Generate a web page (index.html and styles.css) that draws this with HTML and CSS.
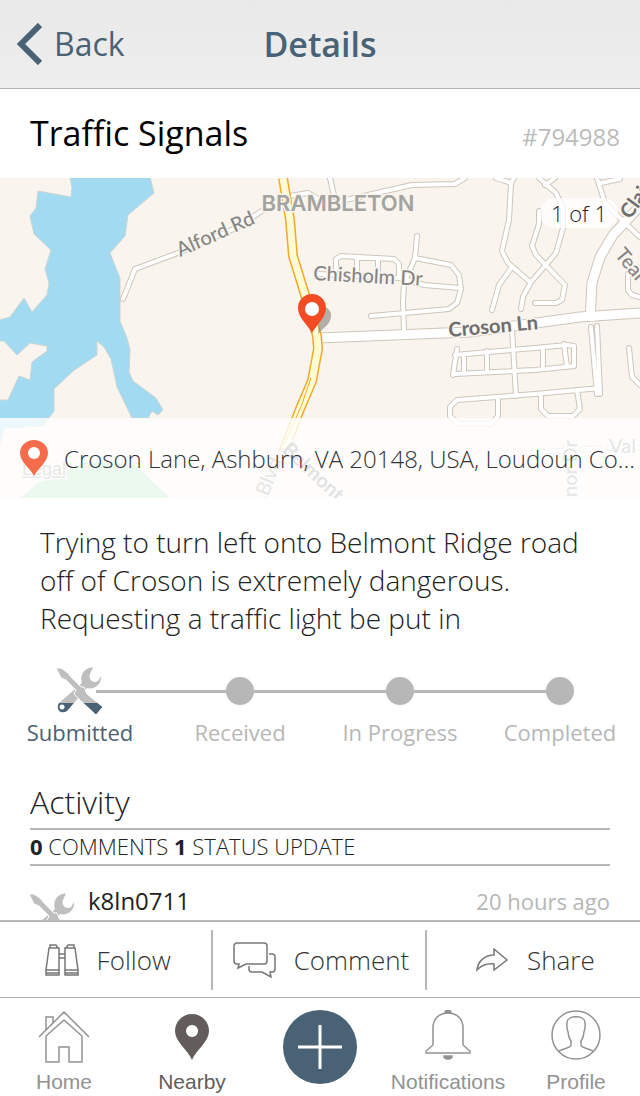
FILE: index.html
```
<!DOCTYPE html>
<html lang="en">
<head>
    <meta charset="UTF-8">
    <meta name="viewport" content="width=device-width, initial-scale=1.0">
    <title>Details</title>
    <link rel="stylesheet" href="styles.css">
</head>
<body>
    <header class="top-bar">
        <a class="back" href="#">
            <svg width="26" height="42" viewBox="0 0 26 42"><path d="M24 2 5 21l19 19" fill="none" stroke="currentColor" stroke-width="6"/></svg>
            <span>Back</span>
        </a>
        <h1>Details</h1>
    </header>

    <main class="content">
        <div class="issue-title">
            <h2>Traffic Signals</h2>
            <span class="issue-id">#794988</span>
        </div>

        <div class="map">
            <svg class="map-canvas" viewBox="0 0 640 320" preserveAspectRatio="xMidYMid slice">
                <defs>
                    <g id="roads" fill="none" stroke-linecap="round" stroke-linejoin="round">
                        <path d="M123 121 135 91 178 75 236 50 274 25 290 18 308 15 318 21 M330 0 334 17 M322 26 350 21 412 7 455 6 465 0"/>
                        <path d="M336 92V81L341 78 394 81 399 86V98 M357 79V96 M378 80V96"/>
                        <path d="M417 58 415 80 404 105 403 125 404 152 M415 80 451 87 459 97 461 111 457 125 449 131 371 138 M318 96 400 100 424 107 460 110"/>
                        <path d="M496 0 511 5 514 0 M511 5 509 42 502 73 508 85 530 104 M512 89 499 107 492 132"/>
                        <path d="M539 33V46L532 68 536 77 565 107 562 122 556 125H535"/>
                        <path d="M539 0 556 15 563 31 563 50 556 75 531 104 523 119 521 131 M545 7 555 0"/>
                        <path d="M597 0 605 25 626 46 640 59 M601 5 620 1"/>
                        <path d="M628 96V112L632 117 640 119"/>
                        <path d="M457 171 453 197 M455 177 500 173 535 170 567 167 574 168V188L535 192 455 196 M464 176V195 M487 173V193 M543 169V188 M564 166 567 189 M512 151 516 218"/>
                        <path d="M591 149 597 216 M597 148 600 216 M600 210 535 216 457 222 450 229V238L458 246H491L498 238V220 M541 216V231L548 238H573L580 231 577 212"/>
                        <path d="M629 170 632 199 640 207 M528 275 600 270 M609 270H640"/>
                    </g>
                    <g id="main-roads" fill="none" stroke-linejoin="round">
                        <path d="M318 160 470 154 580 139 640 135"/>
                        <path d="M590 143 592 105 600 79 613 57 640 28"/>
                    </g>
                    <path id="parkway" fill="none" stroke-linejoin="round" d="M283 0 290 42 293 78 306 120 317 158 318 171 312 203 300 231 283 275"/>
                </defs>
                <rect width="640" height="320" fill="#f9f5ee"/>
                <path fill="#a2daf1" stroke="#cbd5d2" d="M70-1 72 10 71 19 38 13 36 30 30 38 34 56 51 72 45 91 49 105 47 117 32 134 24 120 10 139-1 142V163H4L17 177 30 165 47 168V173L32 184 30 202 19 198 8 222H-1V270L4 250 43 248 54 233V211L73 193 97 177V163L104 169 111 181 117 209 132 240H148L152 233 158 237 163 232 156 220 133 203 129 194 130 172 127 160 120 143V100L110 75 125 58 128 37 154 15 150-1Z"/>
                <path fill="#a0dfb0" d="M20 320 38 305 85 284 135 287 170 320Z"/>
                <use href="#roads" stroke="#cfc5bb" stroke-width="6"/>
                <use href="#main-roads" stroke="#cfc5bb" stroke-width="11"/>
                <use href="#roads" stroke="#fff" stroke-width="4"/>
                <use href="#main-roads" stroke="#fff" stroke-width="9"/>
                <use href="#parkway" stroke="#f4a828" stroke-width="10"/>
                <use href="#parkway" stroke="#fffbd5" stroke-width="7"/>
                <path d="M311 200 302 226 284 267" fill="none" stroke="#f4a828"/>
                <path d="M283 275 265 320" fill="none" stroke="#ddd9d5" stroke-width="6"/>

                <g class="map-labels">
                    <text class="town" x="338" y="33" text-anchor="middle">BRAMBLETON</text>
                    <text transform="translate(180 79) rotate(-24)">Alford Rd</text>
                    <text transform="translate(313 102) rotate(3)">Chisholm Dr</text>
                    <text class="strong" transform="translate(449 159) rotate(-5)">Croson Ln</text>
                    <text class="strong" transform="translate(630 42) rotate(-54)">Clai</text>
                    <text transform="translate(614 77) rotate(50)">Teal</text>
                    <text transform="translate(609 275)">Val</text>
                    <text transform="translate(577 319) rotate(-90)">nor Dr</text>
                    <text transform="translate(268 319) rotate(-68)">Blvd</text>
                    <text class="strong" transform="translate(281 273) rotate(43)">Belmont</text>
                    <text class="legal" x="22" y="297">Legal</text>
                </g>

                <path d="M325 129c7 3 8 10 3 17l-10 10 2-24z" fill="#8d8a85" opacity=".65"/>
                <path d="M312 155c-4-8-14-15-14-25a14 14 0 0 1 28 0c0 10-10 17-14 25z" fill="#f34b23"/>
                <circle cx="312" cy="131" r="7" fill="#fff"/>
            </svg>
            <span class="photo-count">1 of 1</span>
            <div class="address">
                <svg width="28" height="36" viewBox="0 0 28 36"><path d="M14 36C10 28 0 22 0 13a14 13 0 0 1 28 0c0 9-10 15-14 23z" fill="#f66b4a"/><circle cx="14" cy="13" r="6" fill="#fff"/></svg>
                <span>Croson Lane, Ashburn, VA 20148, USA, Loudoun County</span>
            </div>
        </div>

        <p class="description">Trying to turn left onto Belmont Ridge road off of Croson is extremely dangerous. Requesting a traffic light be put in</p>

        <ol class="steps">
            <li class="current">
                <span class="marker">
                    <svg width="46" height="48" viewBox="0 0 46 48">
                        <defs>
                            <linearGradient id="progress" gradientUnits="userSpaceOnUse" x1="0" y1="0" x2="0" y2="48">
                                <stop offset=".74" stop-color="#bfbfbf"/>
                                <stop offset=".74" stop-color="#4a6275"/>
                            </linearGradient>
                            <g id="tools">
                                <path fill-rule="evenodd" d="M36 .5C28 0 22 8 25 16L2 36C-2 42 4 48 10 44L30 21C38 23 45 17 44 9L41 14C36 17 31 12 33 7ZM5 37.500a2.500 2.500 0 1 0 .1 0Z"/>
                                <path stroke="#fff" d="M-1 1 4 1 11 6 14 10 24 20 27 20 30 27 46 40 39 48 25 35 17 27 19 23 9 13 4 11Z"/>
                            </g>
                        </defs>
                        <use href="#tools" fill="url(#progress)"/>
                    </svg>
                </span>
                Submitted
            </li>
            <li><span class="marker"><i class="dot"></i></span>Received</li>
            <li><span class="marker"><i class="dot"></i></span>In Progress</li>
            <li><span class="marker"><i class="dot"></i></span>Completed</li>
        </ol>

        <section class="activity">
            <h3>Activity</h3>
            <p class="counts"><b>0</b> COMMENTS <b>1</b> STATUS UPDATE</p>
            <article class="entry">
                <svg width="46" height="48" viewBox="0 0 46 48"><use href="#tools" fill="#bfbfbf"/></svg>
                <span class="user">k8ln0711</span>
                <time>20 hours ago</time>
            </article>
        </section>
    </main>

    <div class="actions">
        <button type="button">
            <svg width="34" height="32" viewBox="0 0 34 32" fill="none" stroke="currentColor" stroke-width="1.500">
                <path d="M4 4 1 26V31H14V4ZM20 4V31H33V26L30 4ZM5 4V1H11L13 4M21 4 23 1H29V4M1 26H14M20 26H33M1 29H14M20 29H33M14 10H20M14 14H20"/>
            </svg>
            Follow
        </button>
        <button type="button">
            <svg width="43" height="36" viewBox="0 0 43 36" fill="none" stroke="currentColor" stroke-width="1.500">
                <path d="M4 1H31a3 3 0 0 1 3 3V19a3 3 0 0 1-3 3H13L5 26 6 22H4a3 3 0 0 1-3-3V4a3 3 0 0 1 3-3ZM36 12H39a3 3 0 0 1 3 3V27a3 3 0 0 1-3 3H37L38 35 29 30H19a3 3 0 0 1-3-3V24"/>
            </svg>
            Comment
        </button>
        <button type="button">
            <svg width="33" height="24" viewBox="0 0 33 24" fill="none" stroke="currentColor" stroke-width="1.500">
                <path d="M18 1 31 12 18 22V16C10 15 5 18 1 22 2 13 9 7 18 7Z"/>
            </svg>
            Share
        </button>
    </div>

    <nav class="tabs">
        <a href="#">
            <svg width="52" height="53" viewBox="0 0 52 53" fill="none" stroke="currentColor" stroke-width="1.500">
                <path d="M1 27 26 2 51 27M8 20V7H15V13M8 26V52H21V37H31V52H44V26L26 10Z"/>
            </svg>
            Home
        </a>
        <a class="active" href="#">
            <svg width="34" height="46" viewBox="0 0 34 46" fill="currentColor">
                <path fill-rule="evenodd" d="M17 46C13 36 0 28 0 17a17 17 0 0 1 34 0c0 11-13 19-17 29zM17 11a6 6 0 1 0 .1 0Z"/>
            </svg>
            Nearby
        </a>
        <a class="add" href="#" aria-label="Add">
            <svg width="74" height="74" viewBox="0 0 74 74"><circle cx="37" cy="37" r="37" fill="#4a6275"/><path d="M15 37H59M37 15V59" stroke="#fff" stroke-width="3"/></svg>
        </a>
        <a href="#">
            <svg width="46" height="50" viewBox="0 0 46 50" fill="none" stroke="currentColor" stroke-width="1.500">
                <path d="M1 43H45V41L38 35V18C38 8 31 3 23 3S8 8 8 18V35L1 41Z"/>
                <path d="M20 3a3 3 0 0 1 6 0ZM19 46H27C27 50 19 50 19 46Z" fill="currentColor"/>
            </svg>
            Notifications
        </a>
        <a href="#">
            <svg width="50" height="50" viewBox="0 0 50 50" fill="none" stroke="currentColor" stroke-width="1.500">
                <circle cx="25" cy="25" r="24"/>
                <path d="M8 41C14 38 20 38 20 35V31C18 28 17 25 17 22 15 17 16 15 16 12 17 5 33 5 34 12 34 15 35 17 33 22 33 25 32 28 30 31V35C30 38 36 38 42 41"/>
            </svg>
            Profile
        </a>
    </nav>
</body>
</html>
```
FILE: styles.css
```
* {
    box-sizing: border-box;
}
body {
    display: flex;
    flex-direction: column;
    height: 100vh;
    margin: 0;
    background: #fff;
    color: #222;
    font-family: "Open Sans", sans-serif;
}
h1, h2, h3, p, ol {
    margin: 0;
    padding: 0;
}
svg {
    display: block;
    flex-shrink: 0;
}
.top-bar {
    display: grid;
    grid-template-columns: 1fr auto 1fr;
    align-items: center;
    padding: 20px 16px;
    border-bottom: 1px solid #b2b2b2;
    background: linear-gradient(#e9e9e9, #eee);
    color: #4a6275;
    line-height: 48px;
}
.top-bar h1 {
    font-size: 34px;
    font-weight: 600;
}
.back {
    display: flex;
    align-items: center;
    gap: 12px;
    color: inherit;
    font-size: 32px;
    text-decoration: none;
}
.content {
    flex: 1;
    min-height: 0;
    overflow-y: auto;
    scrollbar-width: none;
}
.issue-title {
    display: flex;
    justify-content: space-between;
    align-items: baseline;
    padding: 20px 20px 17px 30px;
    line-height: 48px;
}
.issue-title h2 {
    color: #000;
    font-size: 34px;
    font-weight: 400;
}
.issue-id {
    color: #bbb;
    font-size: 24px;
}

/* Map */
.map {
    position: relative;
    height: 320px;
    overflow: hidden;
}
.map-canvas {
    width: 100%;
    height: 100%;
}
.map-labels text {
    fill: #858585;
    stroke: #f9f5ee;
    stroke-width: 3px;
    paint-order: stroke;
    font-family: Lato, sans-serif;
    font-size: 20px;
    font-weight: 500;
}
.map-labels .strong {
    fill: #6e6e6e;
    font-weight: 700;
}
.map-labels .town {
    fill: #a3a3a0;
    font-family: Inter, sans-serif;
    font-size: 22px;
    font-weight: 600;
}
.map-labels .legal {
    font-family: "Liberation Sans", sans-serif;
    font-size: 18px;
    text-decoration: underline;
}
.photo-count {
    position: absolute;
    top: 20px;
    right: 22px;
    padding: 0 11px;
    border-radius: 15px;
    background: rgba(255, 255, 255, 0.75);
    font-size: 22px;
    font-weight: 300;
    line-height: 30px;
}
.address {
    position: absolute;
    right: 0;
    bottom: 0;
    left: 0;
    display: flex;
    align-items: center;
    gap: 16px;
    height: 80px;
    padding: 0 2px 0 20px;
    background: rgba(255, 255, 255, 0.8);
    color: #333;
    font-size: 24px;
    font-weight: 300;
}
.address span {
    overflow: hidden;
    text-overflow: ellipsis;
    white-space: nowrap;
}

.description {
    padding: 25px 40px 28px;
    font-size: 28px;
    font-weight: 300;
    line-height: 38px;
}

/* Progress steps */
.steps {
    display: grid;
    grid-template-columns: repeat(4, 1fr);
    list-style: none;
    color: #b7b7b7;
    font-size: 22px;
    line-height: 30px;
    text-align: center;
}
.steps li {
    position: relative;
}
.steps .current {
    color: #4a6275;
}
.steps li + li::before {
    content: "";
    position: absolute;
    top: 25px;
    right: 50%;
    width: 100%;
    height: 3px;
    background: #b7b7b7;
}
.steps .current + li::before {
    width: 90%;
}
.marker {
    display: flex;
    justify-content: center;
    align-items: center;
    height: 52px;
}
.dot {
    z-index: 1;
    width: 28px;
    height: 28px;
    border-radius: 50%;
    background: #b7b7b7;
}

.activity {
    padding: 31px 30px 0;
}
.activity h3 {
    padding-bottom: 2px;
    font-size: 32px;
    font-weight: 300;
    line-height: 48px;
}
.counts {
    padding-bottom: 2px;
    border-top: 2px solid #b7b7b7;
    border-bottom: 2px solid #b7b7b7;
    font-size: 22px;
    font-weight: 300;
    line-height: 32px;
}
.counts b {
    font-weight: 700;
}
.entry {
    display: flex;
    align-items: flex-start;
    gap: 12px;
    padding-top: 19px;
    line-height: 32px;
}
.entry svg {
    margin-top: 8px;
}
.user {
    flex: 1;
    font-size: 24px;
}
.entry time {
    color: #b7b7b7;
    font-size: 22px;
}

/* Follow / comment / share */
.actions {
    display: grid;
    grid-template-columns: repeat(3, 1fr);
    padding: 8px 0 7px;
    border-top: 2px solid #b7b7b7;
}
.actions button {
    display: flex;
    justify-content: center;
    align-items: center;
    gap: 18px;
    height: 60px;
    padding: 0 0 0 4px;
    border: none;
    background: none;
    color: #333;
    font-family: inherit;
    font-size: 26px;
    font-weight: 300;
    cursor: pointer;
}
.actions svg {
    color: #777;
}
.actions button:not(:last-child) {
    border-right: 2px solid #b7b7b7;
}

.tabs {
    display: grid;
    grid-template-columns: repeat(5, 1fr);
    height: 99px;
    border-top: 1px solid #b2b2b2;
}
.tabs a {
    display: flex;
    flex-direction: column;
    justify-content: space-between;
    align-items: center;
    padding: 12px 0 2px;
    color: #929292;
    font-family: "Liberation Sans", Arial, sans-serif;
    font-size: 21px;
    line-height: 24px;
    text-decoration: none;
}
.tabs .active {
    padding-top: 16px;
    color: #625d5b;
}
```
